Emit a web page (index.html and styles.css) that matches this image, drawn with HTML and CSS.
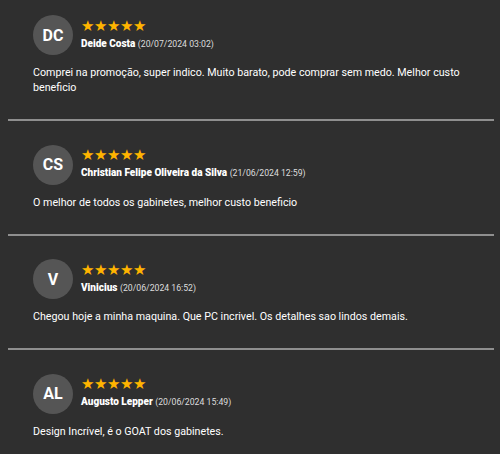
FILE: index.html
```html
<!DOCTYPE html>
<html lang="pt-BR">
<head>
  <meta charset="UTF-8" />
  <meta name="viewport" content="width=device-width, initial-scale=1.0" />
  <title>Avaliações</title>
  <link rel="stylesheet" href="styles.css">
</head>
<body>
  <div class="reviews">
    <div class="review">
      <div class="review-head">
        <div class="avatar">DC</div>
        <div class="meta">
          <div class="stars">★★★★★</div>
          <div class="author"><b>Deide Costa</b> <span class="date">(20/07/2024 03:02)</span></div>
        </div>
      </div>
      <p class="comment">Comprei na promoção, super indico. Muito barato, pode comprar sem medo. Melhor custo beneficio</p>
    </div>
    <hr class="divider">

    <div class="review">
      <div class="review-head">
        <div class="avatar">CS</div>
        <div class="meta">
          <div class="stars">★★★★★</div>
          <div class="author"><b>Christian Felipe Oliveira da Silva</b> <span class="date">(21/06/2024 12:59)</span></div>
        </div>
      </div>
      <p class="comment">O melhor de todos os gabinetes, melhor custo beneficio</p>
    </div>
    <hr class="divider">

    <div class="review">
      <div class="review-head">
        <div class="avatar">V</div>
        <div class="meta">
          <div class="stars">★★★★★</div>
          <div class="author"><b>Vinicius</b> <span class="date">(20/06/2024 16:52)</span></div>
        </div>
      </div>
      <p class="comment">Chegou hoje a minha maquina. Que PC incrivel. Os detalhes sao lindos demais.</p>
    </div>
    <hr class="divider">

    <div class="review">
      <div class="review-head">
        <div class="avatar">AL</div>
        <div class="meta">
          <div class="stars">★★★★★</div>
          <div class="author"><b>Augusto Lepper</b> <span class="date">(20/06/2024 15:49)</span></div>
        </div>
      </div>
      <p class="comment">Design Incrível, é o GOAT dos gabinetes.</p>
    </div>
  </div>
</body>
</html>
```

FILE: styles.css
```css
* { box-sizing: border-box; margin: 0; padding: 0; }
html, body { background: #2f2f2f; font-family: Roboto, "Liberation Sans", sans-serif; color: #fff; }
.reviews { padding: 0 6px 0 8px; }
.review { padding: 15px 25px 24px; }
.review-head { display: flex; align-items: center; gap: 8px; }
.avatar {
  width: 40px; height: 40px; border-radius: 50%; background: #555;
  display: flex; justify-content: center; align-items: center;
  font-size: 16px; font-weight: 700; color: #fff;
}
.meta { display: flex; flex-direction: column; gap: 4px; margin-top: -1px; }
.stars { color: #ffb400; font-size: 15px; line-height: 14px; }
.author { font-size: 10px; line-height: 13px; }
.author b { font-weight: 900; }
.date { color: #ddd; font-size: 8.7px; }
.comment { margin-top: 10px; font-size: 10.7px; line-height: 15px; }
.divider { border: none; border-top: 2px solid #8f8f8f; margin-bottom: 8.5px; }
```
